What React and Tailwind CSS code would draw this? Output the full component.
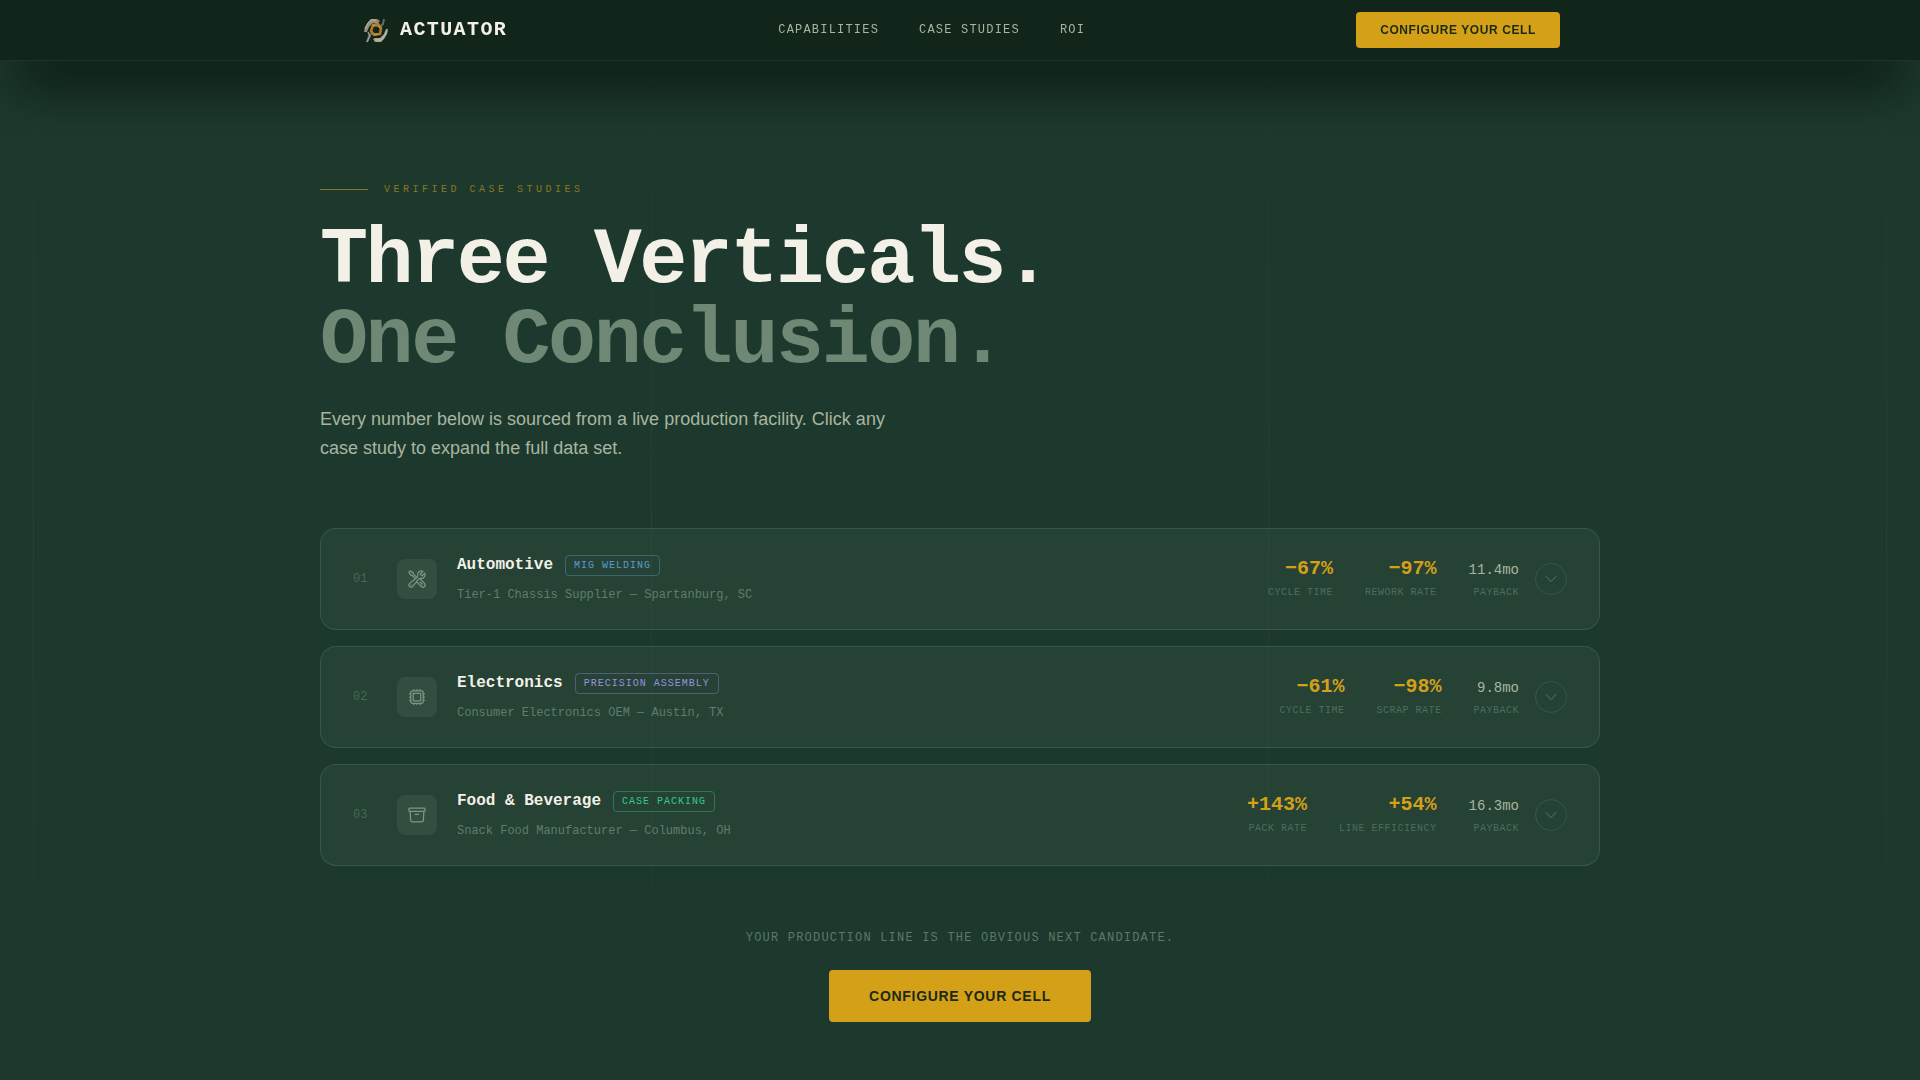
import { useState } from 'react'
import {
  HiOutlineArchiveBox,
  HiOutlineChevronDown,
  HiOutlineCpuChip,
  HiOutlineWrenchScrewdriver,
} from 'react-icons/hi2'

const mono = "font-['Liberation_Mono',monospace]"

const navLinks = [
  { label: 'Capabilities', href: '#capabilities' },
  { label: 'Case Studies', href: '#case-studies' },
  { label: 'ROI', href: '#roi' },
]

const caseStudies = [
  {
    id: '01',
    title: 'Automotive',
    tag: 'MIG Welding',
    tagClass: 'text-[#5a9bd5] border-[#5a9bd5]/40',
    client: 'Tier-1 Chassis Supplier — Spartanburg, SC',
    Icon: HiOutlineWrenchScrewdriver,
    metrics: [
      { value: '−67%', label: 'Cycle Time' },
      { value: '−97%', label: 'Rework Rate' },
    ],
    payback: '11.4mo',
  },
  {
    id: '02',
    title: 'Electronics',
    tag: 'Precision Assembly',
    tagClass: 'text-[#9a8fe0] border-[#9488d8]/40',
    client: 'Consumer Electronics OEM — Austin, TX',
    Icon: HiOutlineCpuChip,
    metrics: [
      { value: '−61%', label: 'Cycle Time' },
      { value: '−98%', label: 'Scrap Rate' },
    ],
    payback: '9.8mo',
  },
  {
    id: '03',
    title: 'Food & Beverage',
    tag: 'Case Packing',
    tagClass: 'text-[#34c98e] border-[#34c98e]/40',
    client: 'Snack Food Manufacturer — Columbus, OH',
    Icon: HiOutlineArchiveBox,
    metrics: [
      { value: '+143%', label: 'Pack Rate' },
      { value: '+54%', label: 'Line Efficiency' },
    ],
    payback: '16.3mo',
  },
]

const Logo = () => (
  <svg viewBox="0 0 32 32" className="w-8 h-8" fill="none" aria-hidden="true">
    <path d="M4 18l1-5 3-5 3-3h6l3 2-2 2h-5l-4 4-2 5z" fill="#8f907e" />
    <path d="M5 15l3-6 3-3h5" stroke="#bdbcab" strokeWidth="1" />
    <path d="M28 15l-1 5-3 5-3 3h-6l-2-3 2-1h5l4-4 2-5z" fill="#a5a592" />
    <path d="M27 17l-3 6-3 3h-5" stroke="#bdbcab" strokeWidth="1" />
    <path d="M24 5l-1 5-4 4M7 28l2-6 4-4" stroke="#56706c" strokeWidth="2" />
    <path d="M8 18l2 4-3 6" stroke="#9fa08e" strokeWidth="1.5" />
    <path d="M13 11l5-1 3 4-1 6-6 1-3-4z" stroke="#b97a25" strokeWidth="2.5" />
    <path d="M13 12h5l2 2M18 20h-4" stroke="#e2aa4c" strokeWidth="1" />
  </svg>
)

const Navbar = () => (
  <header className="sticky top-0 z-20 bg-[#12251a] border-b border-[#1e3424] shadow-[0_36px_52px_-16px_rgba(2,10,5,0.95)]">
    <nav className="max-w-7xl mx-auto px-10 h-15 flex items-center justify-between">
      <a href="#top" className="flex items-center gap-2">
        <Logo />
        <span className={`${mono} text-xl font-bold tracking-[0.07em] text-[#f3f0e8]`}>ACTUATOR</span>
      </a>
      <div className="flex items-center gap-10">
        {navLinks.map((link) => (
          <a
            key={link.label}
            href={link.href}
            className={`${mono} text-xs tracking-widest uppercase text-[#a8b5a0] hover:text-[#f3f0e8]`}
          >
            {link.label}
          </a>
        ))}
      </div>
      <button className="px-6 py-2.5 rounded bg-[#d4a017] text-[#1a2a14] text-xs font-bold tracking-wider uppercase">
        Configure Your Cell
      </button>
    </nav>
  </header>
)

// Faint vertical rules that run over the whole viewport
const GridLines = () => (
  <div className="fixed inset-0 z-10 px-[33px] flex justify-between pointer-events-none" aria-hidden="true">
    {[0, 1, 2, 3].map((i) => (
      <div key={i} className="w-px bg-linear-to-b from-transparent via-white/4 to-transparent" />
    ))}
  </div>
)

const Metric = ({ label, children }) => (
  <span className="flex flex-col items-end gap-1.5">
    <span className="h-5 flex items-end">{children}</span>
    <span className="text-[10px] leading-[15px] tracking-wider uppercase text-[#4f6d5d]">{label}</span>
  </span>
)

const CaseStudy = ({ study, open, onToggle }) => {
  const { id, title, tag, tagClass, client, Icon, metrics, payback } = study

  return (
    <button
      onClick={onToggle}
      aria-expanded={open}
      className={`${mono} w-full px-8 py-6 flex items-center gap-5 text-left rounded-2xl border border-[#a0c8b0]/15 bg-[#a0c8b0]/7 hover:bg-[#a0c8b0]/10`}
    >
      <span className="w-6 text-xs text-[#4a6656]">{id}</span>
      <span className="w-10 h-10 rounded-lg bg-[#324e40] flex items-center justify-center">
        <Icon className="w-5 h-5 text-[#7f9583]" />
      </span>
      <span className="flex-1 flex flex-col gap-2">
        <span className="flex items-center gap-3">
          <span className="text-base leading-6 font-bold text-[#f3f0e8]">{title}</span>
          <span className={`px-2 py-0.5 rounded border text-[10px] leading-[15px] tracking-widest uppercase ${tagClass}`}>
            {tag}
          </span>
        </span>
        <span className="text-xs leading-5 text-[#617c6a]">{client}</span>
      </span>
      <span className="flex items-center gap-4">
        <span className="flex items-center gap-8">
          {metrics.map((metric) => (
            <Metric key={metric.label} label={metric.label}>
              <span className="text-xl leading-5 font-bold text-[#d4a017]">{metric.value}</span>
            </Metric>
          ))}
          <Metric label="Payback">
            <span className="text-sm leading-[18px] text-[#a8b5a0]">{payback}</span>
          </Metric>
        </span>
        <span className="w-8 h-8 rounded-full border border-[#a0c8b0]/15 flex items-center justify-center">
          <HiOutlineChevronDown className={`w-4 h-4 text-[#5d7866] ${open ? 'rotate-180' : ''}`} />
        </span>
      </span>
    </button>
  )
}

const App = () => {
  const [openId, setOpenId] = useState(null)

  return (
    <div id="top" className="min-h-screen bg-[#1d392d] font-['Liberation_Sans',Arial,sans-serif]">
      <Navbar />
      <GridLines />

      <main id="case-studies" className="max-w-7xl mx-auto pt-[121px] pb-14">
        {/* Heading */}
        <div className="mb-[65px]">
          <div className="flex items-center gap-4 mb-6">
            <span className="w-12 h-px bg-[#8b7720]" />
            <span className={`${mono} text-[10px] leading-[15px] tracking-[0.35em] uppercase text-[#8b7720]`}>
              Verified Case Studies
            </span>
          </div>
          <h1 className={`${mono} text-[80px] leading-none font-bold tracking-[-0.03em] text-[#f3f0e8] mb-6`}>
            Three Verticals.
            <br />
            <span className="text-[#6f8775]">One Conclusion.</span>
          </h1>
          <p className="max-w-xl text-lg leading-[29px] text-[#a8b5a0]">
            Every number below is sourced from a live production facility. Click any case study to expand the full data
            set.
          </p>
        </div>

        {/* Case studies */}
        <div className="flex flex-col gap-4">
          {caseStudies.map((study) => (
            <CaseStudy
              key={study.id}
              study={study}
              open={openId === study.id}
              onToggle={() => setOpenId(openId === study.id ? null : study.id)}
            />
          ))}
        </div>

        {/* Bottom call to action */}
        <div className="mt-16 flex flex-col items-center gap-6">
          <p className={`${mono} text-xs tracking-widest uppercase text-[#5d7866]`}>
            Your production line is the obvious next candidate.
          </p>
          <button className="px-10 py-4 rounded bg-[#d4a017] text-[#1a2a14] text-sm font-bold tracking-wider uppercase">
            Configure Your Cell
          </button>
        </div>
      </main>
    </div>
  )
}

export default App
